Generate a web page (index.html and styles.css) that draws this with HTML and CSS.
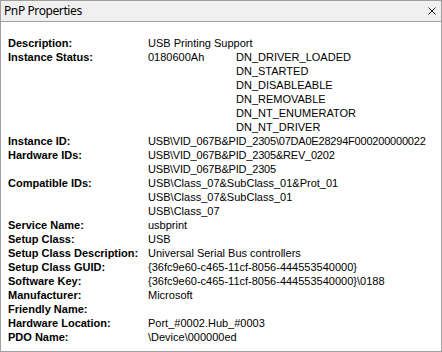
FILE: index.html
```html
<!DOCTYPE html>
<html lang="en">
<head>
  <meta charset="UTF-8" />
  <title>PnP Properties</title>
  <link rel="stylesheet" href="styles.css">
</head>
<body>
  <div class="window">
    <div class="titlebar">
      <span class="title">PnP Properties</span>
      <svg class="close" width="8" height="8" viewBox="0 0 8 8">
        <path d="M0.5 0.5 L7.5 7.5 M7.5 0.5 L0.5 7.5" stroke="#222" stroke-width="1" fill="none" />
      </svg>
    </div>

    <div class="props">
      <div class="row">
        <div class="label">Description:</div>
        <div class="value">USB Printing Support</div>
      </div>
      <div class="row">
        <div class="label">Instance Status:</div>
        <div class="value status">
          <div class="code">0180600Ah</div>
          <div class="flags">
            <div>DN_DRIVER_LOADED</div>
            <div>DN_STARTED</div>
            <div>DN_DISABLEABLE</div>
            <div>DN_REMOVABLE</div>
            <div>DN_NT_ENUMERATOR</div>
            <div>DN_NT_DRIVER</div>
          </div>
        </div>
      </div>
      <div class="row">
        <div class="label">Instance ID:</div>
        <div class="value ids">USB\VID_067B&amp;PID_2305\07DA0E28294F000200000022</div>
      </div>
      <div class="row">
        <div class="label">Hardware IDs:</div>
        <div class="value ids">
          <div>USB\VID_067B&amp;PID_2305&amp;REV_0202</div>
          <div>USB\VID_067B&amp;PID_2305</div>
        </div>
      </div>
      <div class="row">
        <div class="label">Compatible IDs:</div>
        <div class="value">
          <div>USB\Class_07&amp;SubClass_01&amp;Prot_01</div>
          <div>USB\Class_07&amp;SubClass_01</div>
          <div>USB\Class_07</div>
        </div>
      </div>
      <div class="row">
        <div class="label">Service Name:</div>
        <div class="value">usbprint</div>
      </div>
      <div class="row">
        <div class="label">Setup Class:</div>
        <div class="value">USB</div>
      </div>
      <div class="row">
        <div class="label">Setup Class Description:</div>
        <div class="value">Universal Serial Bus controllers</div>
      </div>
      <div class="row">
        <div class="label">Setup Class GUID:</div>
        <div class="value">{36fc9e60-c465-11cf-8056-444553540000}</div>
      </div>
      <div class="row">
        <div class="label">Software Key:</div>
        <div class="value">{36fc9e60-c465-11cf-8056-444553540000}\0188</div>
      </div>
      <div class="row">
        <div class="label">Manufacturer:</div>
        <div class="value">Microsoft</div>
      </div>
      <div class="row">
        <div class="label">Friendly Name:</div>
        <div class="value"></div>
      </div>
      <div class="row">
        <div class="label">Hardware Location:</div>
        <div class="value">Port_#0002.Hub_#0003</div>
      </div>
      <div class="row">
        <div class="label">PDO Name:</div>
        <div class="value">\Device\000000ed</div>
      </div>
    </div>
  </div>
</body>
</html>
```
FILE: styles.css
```css
body {
  margin: 0;
  background-color: #ffffff;
}
.window {
  width: 442px;
  height: 352px;
  box-sizing: border-box;
  border: 1px solid #a0a0a0;
  background-color: #ffffff;
  overflow: hidden;
}
.titlebar {
  height: 20px;
  display: flex;
  align-items: center;
  justify-content: space-between;
  padding: 0 5px 0 3px;
  background-color: #f0f0f0;
  border-bottom: 1px solid #a0a0a0;
}
.title {
  font-family: "Noto Sans", sans-serif;
  font-size: 12px;
  letter-spacing: -0.4px;
  line-height: 20px;
  color: #000000;
}
.close { display: block; }
.props {
  padding: 14px 0 0 7px;
  font-family: "Liberation Sans", Arial, sans-serif;
  font-size: 11px;
  line-height: 14px;
  color: #000000;
}
.row { display: flex; }
.label {
  width: 140px;
  flex-shrink: 0;
  font-weight: bold;
}
.value { min-height: 14px; white-space: nowrap; }
.ids { letter-spacing: -0.2px; }
.status { display: flex; }
.code { width: 88px; }
```
